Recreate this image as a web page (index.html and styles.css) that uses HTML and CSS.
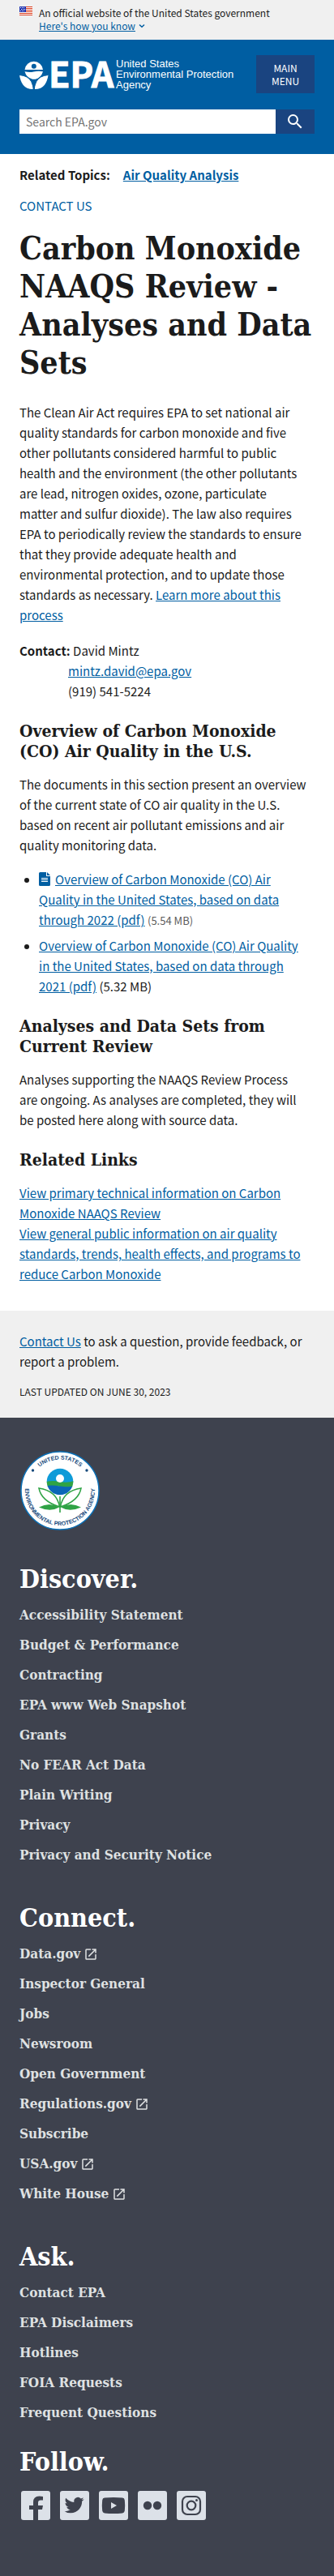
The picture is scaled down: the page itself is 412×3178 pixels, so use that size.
FILE: index.html
```html
<!DOCTYPE html>
<html lang="en">
<head>
<meta charset="utf-8">
<meta name="viewport" content="width=device-width, initial-scale=1">
<title>Carbon Monoxide NAAQS Review - Analyses and Data Sets | US EPA</title>
<link rel="stylesheet" href="styles.css">
</head>
<body>
<svg class="sprite" aria-hidden="true">
  <symbol id="external" viewBox="0 0 24 24"><path d="M19 19H5V5h7V3H5a2 2 0 0 0-2 2v14a2 2 0 0 0 2 2h14c1.100 0 2-.9 2-2v-7h-2v7zM14 3v2h3.590l-9.830 9.830 1.410 1.410L19 6.410V10h2V3h-7z"/></symbol>
</svg>

<section class="banner" aria-label="Official website of the United States government">
  <svg class="flag" viewBox="0 0 16 11" aria-hidden="true">
    <path fill="#fff" d="M0 0h16v11H0z"/>
    <path fill="#db3e1f" d="M0 0h16v1H0zM0 2h16v1H0zM0 4h16v1H0zM0 6h16v1H0zM0 8h16v1H0zM0 10h16v1H0z"/>
    <path fill="#1e33b1" d="M0 0h8v7H0z"/>
    <path fill="#fff" d="M1 1h1v1H1zM3 1h1v1H3zM5 1h1v1H5zM2 3h1v1H2zM4 3h1v1H4zM6 3h1v1H6zM1 5h1v1H1zM3 5h1v1H3zM5 5h1v1H5z"/>
  </svg>
  <div class="banner-text">
    <p>An official website of the United States government</p>
    <button type="button" class="banner-toggle"><span>Here's how you know</span><svg class="chevron" viewBox="0 0 8 6" aria-hidden="true"><path d="M1 1.500l3 2.700 3-2.700" fill="none" stroke="currentColor" stroke-width="1.500"/></svg></button>
  </div>
</section>

<header class="header">
  <div class="header-row">
    <a class="logo" href="#" aria-label="US EPA home">
      <svg class="logo-mark" viewBox="0 0 116 36" aria-hidden="true">
        <g fill="#fff">
          <path d="M6.500 12A11.300 11.300 0 0 1 29 12z"/>
          <path d="M6.500 14.200q5.500 1.500 11 .3 6-1.600 11.500-.2-2.200 7.600-9.300 9.400h-3.600q-7.600-2-9.600-9.500z"/>
          <path d="M0 18.500q11 1 14.700 8.200 2 4 1.900 9.300Q8.500 36 4.500 30.800 1 26 0 18.500z"/>
          <path d="M35.500 18.500q-11 1-14.700 8.200-2 4-1.900 9.300 8.100 0 12.100-5.200 3.500-4.800 4.500-12.300z"/>
        </g>
        <circle cx="17.800" cy="7.800" r="3" fill="#005ea2"/>
        <path d="M0 18.500q11 1 14.700 8.200l3 8 3.100-8q3.700-7.200 14.700-8.200" fill="none" stroke="#005ea2" stroke-width="1"/>
        <text class="logo-letters" x="36" y="34">EPA</text>
      </svg>
      <span class="logo-text">United States<br>Environmental Protection<br>Agency</span>
    </a>
    <button type="button" class="menu-button">MAIN MENU</button>
  </div>
  <form class="search" role="search">
    <input class="search-input" type="search" aria-label="Search EPA.gov" placeholder="Search EPA.gov">
    <button type="button" class="search-button" aria-label="Search"><svg viewBox="0 0 24 24" aria-hidden="true"><path fill="#fff" d="M15.500 14h-.79l-.28-.27A6.470 6.470 0 0 0 16 9.500 6.500 6.500 0 1 0 9.500 16c1.610 0 3.090-.59 4.230-1.570l.27.280v.79l5 4.990L20.490 19l-4.990-5zm-6 0C7.010 14 5 11.990 5 9.500S7.010 5 9.500 5 14 7.010 14 9.500 11.990 14 9.500 14z"/></svg></button>
  </form>
</header>

<main class="main">
  <p class="related"><span>Related Topics:</span><a href="#">Air Quality Analysis</a></p>
  <p class="contact-link"><a href="#">CONTACT US</a></p>
  <h1>Carbon Monoxide NAAQS Review - Analyses and Data Sets</h1>
  <p class="intro">The Clean Air Act requires EPA to set national air quality standards for carbon monoxide and five other pollutants considered harmful to public health and the environment (the other pollutants are lead, nitrogen oxides, ozone, particulate matter and sulfur dioxide). The law also requires EPA to periodically review the standards to ensure that they provide adequate health and environmental protection, and to update those standards as necessary. <a href="#">Learn more about this process</a></p>
  <address class="person">
    <p><strong>Contact:</strong> David Mintz</p>
    <p class="person-detail"><a href="#">mintz.david@epa.gov</a></p>
    <p class="person-detail">(919) 541-5224</p>
  </address>

  <h2>Overview of Carbon Monoxide (CO) Air Quality in the U.S.</h2>
  <p>The documents in this section present an overview of the current state of CO air quality in the U.S. based on recent air pollutant emissions and air quality monitoring data.</p>
  <ul class="documents">
    <li><svg class="file-icon" viewBox="0 0 14 17" aria-hidden="true"><path fill="#005ea2" d="M1.500 0H9v5h5v10.500a1.500 1.500 0 0 1-1.500 1.500h-11A1.500 1.500 0 0 1 0 15.500v-14A1.500 1.500 0 0 1 1.500 0zM10 0l4 4h-4z"/><path fill="#fff" d="M3 7h8v1H3zM3 9h8v1H3zM3 11h8v1H3z"/></svg><a href="#">Overview of Carbon Monoxide (CO) Air Quality in the United States, based on data through 2022 (pdf)</a> <span class="file-size">(5.54 MB)</span></li>
    <li><a href="#">Overview of Carbon Monoxide (CO) Air Quality in the United States, based on data through 2021 (pdf)</a> (5.32 MB)</li>
  </ul>

  <h2>Analyses and Data Sets from Current Review</h2>
  <p>Analyses supporting the NAAQS Review Process are ongoing. As analyses are completed, they will be posted here along with source data.</p>

  <h2>Related Links</h2>
  <p><a href="#">View primary technical information on Carbon Monoxide NAAQS Review</a><br><a href="#">View general public information on air quality standards, trends, health effects, and programs to reduce Carbon Monoxide</a></p>
</main>

<aside class="feedback">
  <p><a href="#">Contact Us</a> to ask a question, provide feedback, or report a problem.</p>
  <p class="updated">LAST UPDATED ON JUNE 30, 2023</p>
</aside>

<footer class="footer">
  <svg class="seal" viewBox="0 0 98 98" role="img" aria-label="United States Environmental Protection Agency seal">
    <defs>
      <path id="seal-top" d="M10.500 49a38.500 38.500 0 0 1 77 0"/>
      <path id="seal-bottom" d="M10 30.800A43 43 0 1 0 88 30.800"/>
      <clipPath id="bloom"><circle cx="49" cy="38" r="16.300"/></clipPath>
    </defs>
    <circle cx="49" cy="49" r="48" fill="#fff" stroke="#0b71b8" stroke-width="1.500"/>
    <g class="seal-text">
      <text text-anchor="middle"><textPath href="#seal-top" startOffset="50%">UNITED STATES</textPath></text>
      <text text-anchor="middle"><textPath href="#seal-bottom" startOffset="50%">ENVIRONMENTAL PROTECTION AGENCY</textPath></text>
    </g>
    <circle cx="15.500" cy="24" r="1.700" fill="#174a7c"/>
    <circle cx="82" cy="24" r="1.700" fill="#174a7c"/>
    <g clip-path="url(#bloom)">
      <path fill="#0e9bd8" d="M32 20h34v19H32z"/>
      <path fill="#2fa345" d="M32 38q8-2 17 0t17-1v7q-9 2-17 0t-17 0z"/>
      <path fill="#0a66b7" d="M32 43q8-1 17 .5t17 0V56H32z"/>
    </g>
    <circle cx="49" cy="34" r="5" fill="#fff"/>
    <g fill="#fff" stroke="#2fa345" stroke-width="1.500">
      <path d="M48.500 69Q45 49 23 46q3 16 25.500 23z"/>
      <path d="M49.500 69Q53 49 75 46q-3 16-25.500 23z"/>
    </g>
    <path fill="#2fa345" d="M23 69.500q13-7 25 0Q37 76 23 69.500zM75 69.500q-13-7-25 0Q61 76 75 69.500z"/>
    <path stroke="#2fa345" stroke-width="1.600" d="M49 56v20"/>
  </svg>

  <nav class="footer-group" aria-labelledby="discover">
    <h2 id="discover">Discover.</h2>
    <ul>
      <li><a href="#">Accessibility Statement</a></li>
      <li><a href="#">Budget &amp; Performance</a></li>
      <li><a href="#">Contracting</a></li>
      <li><a href="#">EPA www Web Snapshot</a></li>
      <li><a href="#">Grants</a></li>
      <li><a href="#">No FEAR Act Data</a></li>
      <li><a href="#">Plain Writing</a></li>
      <li><a href="#">Privacy</a></li>
      <li><a href="#">Privacy and Security Notice</a></li>
    </ul>
  </nav>
  <nav class="footer-group" aria-labelledby="connect">
    <h2 id="connect">Connect.</h2>
    <ul>
      <li><a href="#">Data.gov<svg class="external"><use href="#external"/></svg></a></li>
      <li><a href="#">Inspector General</a></li>
      <li><a href="#">Jobs</a></li>
      <li><a href="#">Newsroom</a></li>
      <li><a href="#">Open Government</a></li>
      <li><a href="#">Regulations.gov<svg class="external"><use href="#external"/></svg></a></li>
      <li><a href="#">Subscribe</a></li>
      <li><a href="#">USA.gov<svg class="external"><use href="#external"/></svg></a></li>
      <li><a href="#">White House<svg class="external"><use href="#external"/></svg></a></li>
    </ul>
  </nav>
  <nav class="footer-group" aria-labelledby="ask">
    <h2 id="ask">Ask.</h2>
    <ul>
      <li><a href="#">Contact EPA</a></li>
      <li><a href="#">EPA Disclaimers</a></li>
      <li><a href="#">Hotlines</a></li>
      <li><a href="#">FOIA Requests</a></li>
      <li><a href="#">Frequent Questions</a></li>
    </ul>
  </nav>
  <section class="follow" aria-labelledby="follow">
    <h2 id="follow">Follow.</h2>
    <div class="social">
      <a href="#" aria-label="Facebook"><svg viewBox="0 0 36 36"><rect width="36" height="36" rx="3" fill="#dce1e8"/><path fill="#3e424e" d="M15 36V23h-5v-5h5v-4q0-7.500 7.500-7.500 2.500 0 4.500.5v4.500h-3q-3 0-3 3V18h6l-1 5h-5v13z"/></svg></a>
      <a href="#" aria-label="Twitter"><svg viewBox="0 0 36 36"><rect width="36" height="36" rx="3" fill="#dce1e8"/><path fill="#3e424e" transform="translate(5.600 5.600)" d="M23.950 4.570a10 10 0 0 1-2.820.770 4.960 4.960 0 0 0 2.160-2.720c-.95.550-2 .960-3.130 1.180a4.920 4.920 0 0 0-8.380 4.480C7.690 8.090 4.070 6.130 1.640 3.160a4.820 4.820 0 0 0-.67 2.480c0 1.710.87 3.210 2.190 4.100a4.900 4.900 0 0 1-2.230-.62v.06a4.920 4.920 0 0 0 3.950 4.830 5 5 0 0 1-2.210.080 4.940 4.940 0 0 0 4.600 3.420A9.870 9.870 0 0 1 0 19.540a13.990 13.990 0 0 0 7.550 2.210c9.050 0 14-7.500 14-13.980 0-.21 0-.42-.02-.63a9.940 9.940 0 0 0 2.460-2.550z"/></svg></a>
      <a href="#" aria-label="YouTube"><svg viewBox="0 0 36 36"><rect width="36" height="36" rx="3" fill="#dce1e8"/><path fill="#3e424e" d="M7 8.600q11-1.200 22 0 2.500.3 2.800 2.800.8 6.600 0 13.200-.3 2.500-2.800 2.800-11 1.200-22 0-2.500-.3-2.800-2.800-.8-6.600 0-13.200Q4.500 8.900 7 8.600z"/><path fill="#dce1e8" d="M15 14l7 4-7 4z"/></svg></a>
      <a href="#" aria-label="Flickr"><svg viewBox="0 0 36 36"><rect width="36" height="36" rx="3" fill="#dce1e8"/><circle cx="12" cy="18" r="5.200" fill="#3e424e"/><circle cx="24" cy="18" r="5.200" fill="#3e424e"/></svg></a>
      <a href="#" aria-label="Instagram"><svg viewBox="0 0 36 36"><rect width="36" height="36" rx="3" fill="#dce1e8"/><g fill="none" stroke="#3e424e" stroke-width="2.200"><rect x="7" y="7" width="22" height="22" rx="6"/><circle cx="18" cy="18" r="5.300"/></g><circle cx="24.500" cy="11.600" r="1.500" fill="#3e424e"/></svg></a>
    </div>
  </section>
</footer>
</body>
</html>
```
FILE: styles.css
```css
* {
  box-sizing: border-box;
}

body {
  margin: 0;
  background: #fff;
  color: #1b1b1b;
  font-family: "Noto Sans CJK SC", "Open Sans", sans-serif;
  font-size: 15px;
  line-height: 25px;
}

h1,
h2,
p,
ul {
  margin: 0;
}

ul {
  padding: 0;
}

h1,
h2,
.footer-group {
  font-family: "DejaVu Serif Condensed", "DejaVu Serif", serif;
  font-weight: bold;
}

a {
  color: #005ea2;
}

button,
input {
  border: 0;
  border-radius: 0;
  font: inherit;
}

.sprite {
  display: none;
}

/* Government banner */
.banner {
  display: flex;
  gap: 8px;
  padding: 8px 24px 9px;
  background: #f0f0f0;
  font-size: 12px;
  line-height: 16px;
}

.flag {
  flex: none;
  width: 16px;
  height: 11px;
}

.banner-toggle {
  display: flex;
  align-items: center;
  gap: 4px;
  padding: 0;
  background: none;
  color: #005ea2;
}

.banner-toggle span {
  text-decoration: underline;
}

.chevron {
  width: 8px;
  height: 6px;
}

/* Header */
.header {
  display: grid;
  gap: 20px;
  padding: 19px 24px 25px;
  background: #005ea2;
}

.header-row {
  display: flex;
  justify-content: space-between;
  align-items: center;
}

.logo {
  display: flex;
  align-items: center;
  gap: 3px;
  color: #fff;
  text-decoration: none;
}

.logo-mark {
  flex: none;
  width: 116px;
  height: 36px;
  overflow: visible;
}

.logo-letters {
  fill: #fff;
  stroke: #fff;
  stroke-width: 1px;
  font: bold 43px "Noto Sans CJK SC", "Open Sans", sans-serif;
}

.logo-text {
  font: 13px/13px "Liberation Sans", Arial, sans-serif;
  white-space: nowrap;
}

.menu-button {
  width: 72px;
  padding: 8px 12px 7px;
  background: #1a4480;
  color: #fff;
  font-size: 12px;
  line-height: 16px;
}

.search {
  display: flex;
}

.search-input {
  flex: 1;
  min-width: 0;
  height: 30px;
  padding: 0 8px;
  background: #fff;
  color: #1b1b1b;
  font-size: 14px;
}

.search-input::placeholder {
  color: #757575;
}

.search-button {
  display: grid;
  place-items: center;
  width: 48px;
  padding: 0;
  background: #1a4480;
}

.search-button svg {
  width: 24px;
  height: 24px;
}

/* Article */
.main {
  padding: 13px 24px 33px;
}

.main p {
  padding-right: 10px;
}

.related {
  display: flex;
  flex-wrap: wrap;
  gap: 16px;
  font-weight: bold;
}

.contact-link {
  margin-top: 13px;
}

.contact-link a {
  text-decoration: none;
}

h1 {
  margin-top: 17px;
  font-size: 39px;
  line-height: 47px;
}

.main .intro {
  margin-top: 25px;
  padding-right: 14px;
}

.person {
  margin-top: 19px;
  font-style: normal;
}

.person-detail {
  padding-left: 60px;
}

.main h2 {
  margin: 24px 0 16px;
  font-size: 21px;
  line-height: 25px;
}

.documents {
  display: grid;
  gap: 6px;
  margin-top: 17px;
  padding: 0 6px 0 24px;
}

.file-icon {
  width: 14px;
  height: 17px;
  margin-right: 6px;
  vertical-align: -2px;
}

.file-size {
  color: #5c5c5c;
  font-size: 13px;
}

.feedback {
  padding: 25px 24px 22px;
  background: #f0f0f0;
}

.updated {
  margin-top: 15px;
  font-size: 12px;
  line-height: 20px;
}

/* Footer */
.footer {
  padding: 41px 24px 69px;
  background: #3e424e;
  color: #fff;
}

.seal {
  display: block;
  width: 98px;
  height: 98px;
  margin: 0 0 40px 1px;
}

.seal-text {
  fill: #174a7c;
  font: bold 7px "Liberation Sans", Arial, sans-serif;
}

.footer h2 {
  font-size: 32px;
  line-height: 40px;
}

.footer-group {
  margin-bottom: 47px;
  font-size: 17px;
  line-height: 21px;
}

.footer-group:nth-of-type(3) {
  margin-bottom: 30px;
}

.footer-group ul {
  display: grid;
  gap: 16px;
  margin-top: 14px;
  list-style: none;
}

.footer-group a {
  color: #dfe1e2;
  text-decoration: none;
}

.external {
  width: 18px;
  height: 18px;
  margin-left: 4px;
  fill: currentColor;
  vertical-align: -4px;
}

.social {
  display: flex;
  gap: 12px;
  margin-top: 16px;
  padding-left: 2px;
}

.social a,
.social svg {
  display: block;
  width: 36px;
  height: 36px;
}
```
